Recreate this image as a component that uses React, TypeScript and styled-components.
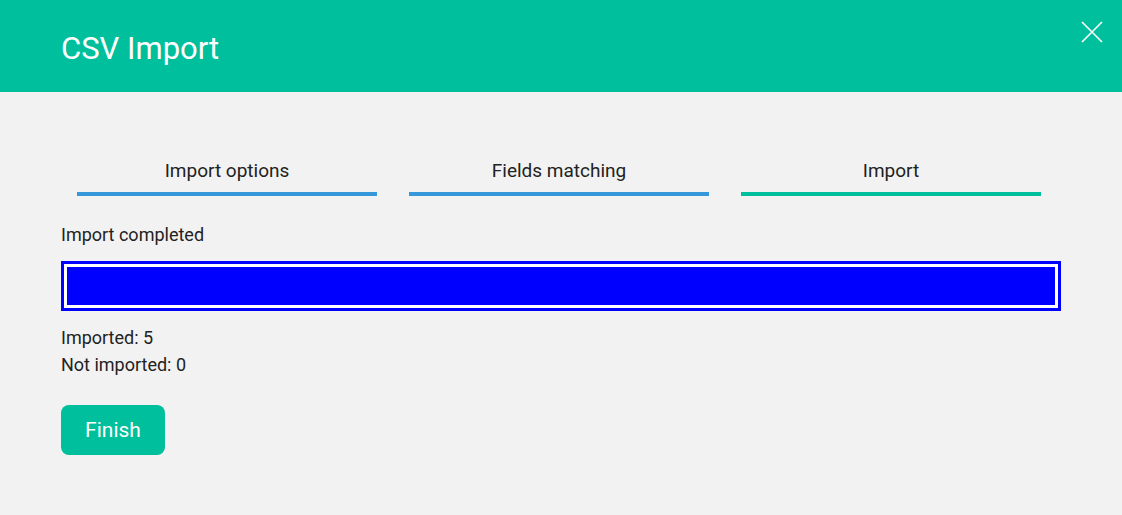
import React from 'react';
import styled, { createGlobalStyle } from 'styled-components';

const GlobalStyle = createGlobalStyle`
    body {
        margin: 0;
        background: #f2f2f2;
        font-family: Roboto, "Liberation Sans", sans-serif;
        color: #222;
    }
`;

// 상단 헤더
const Header = styled.header`
    height: 92px;
    background: #00bf9c;
    display: flex;
    align-items: center;
    justify-content: space-between;
    padding: 0 19px 0 61px;
    box-sizing: border-box;
`;

const Title = styled.h1`
    margin: 0;
    font-size: 31px;
    font-weight: 400;
    color: #fff;
    padding-top: 4px;
`;

const CloseButton = styled.button`
    align-self: flex-start;
    margin-top: 20px;
    width: 24px;
    height: 24px;
    border: 0;
    padding: 0;
    background: none;
    cursor: pointer;
`;

const Body = styled.main`
    padding: 68px 61px 0;
`;

const Steps = styled.div`
    display: flex;
    width: 1000px;
`;

const Step = styled.div<{ $color: string }>`
    flex: 0 0 300px;
    margin: 0 16px;
    text-align: center;
    font-size: 19px;
    line-height: 22px;
    padding-bottom: 10px;
    border-bottom: 4px solid ${p => p.$color};
`;

const Status = styled.div`
    margin-top: 28px;
    font-size: 18px;
    line-height: 22px;
`;

const Progress = styled.div`
    margin-top: 15px;
    width: 1000px;
    height: 50px;
    box-sizing: border-box;
    border: 3px solid #0000ff;
    padding: 3px;
    background: #fff;
`;

const Fill = styled.div`
    height: 100%;
    background: #0000ff;
`;

const Stats = styled.div`
    margin-top: 13px;
    font-size: 18px;
    line-height: 27px;
`;

const FinishButton = styled.button`
    display: block;
    margin-top: 27px;
    width: 104px;
    height: 50px;
    border: 0;
    border-radius: 8px;
    background: #00bf9c;
    color: #fff;
    font-family: inherit;
    font-size: 21px;
    cursor: pointer;
`;

const App = () => {
    const done = 5;
    const total = 5;
    return (
        <>
            <GlobalStyle />
            <Header>
                <Title>CSV Import</Title>
                <CloseButton aria-label="close">
                    <svg width="24" height="24" viewBox="0 0 24 24">
                        <path d="M3 2 L23 22 M23 2 L3 22" stroke="#fff" strokeWidth="1.6" />
                    </svg>
                </CloseButton>
            </Header>
            <Body>
                <Steps>
                    <Step $color="#3498db">Import options</Step>
                    <Step $color="#3498db">Fields matching</Step>
                    <Step $color="#00bf9c">Import</Step>
                </Steps>
                <Status>Import completed</Status>
                <Progress>
                    <Fill style={{ width: `${(done / total) * 100}%` }} />
                </Progress>
                <Stats>
                    <div>Imported: 5</div>
                    <div>Not imported: 0</div>
                </Stats>
                <FinishButton>Finish</FinishButton>
            </Body>
        </>
    );
};

export default App;
